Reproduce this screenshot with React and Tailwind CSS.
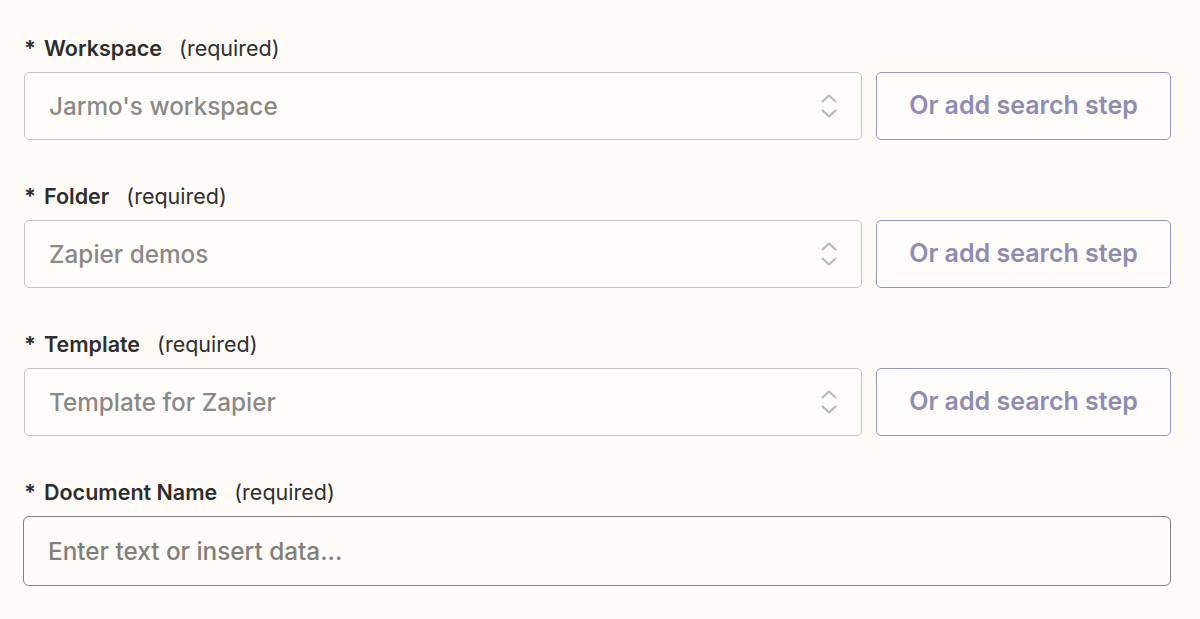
import { Fragment } from 'react';

const FIELDS = [
  { label: 'Workspace', value: "Jarmo's workspace" },
  { label: 'Folder', value: 'Zapier demos' },
  { label: 'Template', value: 'Template for Zapier' },
];

const Label = ({ text }) => (
  <div className="flex items-center h-6 text-[21.5px] leading-6 text-[#2d2e2e]">
    <span className="font-bold w-5">*</span>
    <span className="font-semibold">{text}</span>
    <span className="ml-[17px] font-normal">(required)</span>
  </div>
);

const UpDown = () => (
  <svg width="18" height="26" viewBox="0 0 18 26" fill="none" stroke="#b8b6b2" strokeWidth="2" strokeLinecap="round" strokeLinejoin="round">
    <path d="M2.5 8.5 9 2.5l6.5 6" />
    <path d="M2.5 17.5 9 23.5l6.5-6" />
  </svg>
);

const SelectRow = ({ label, value }) => (
  <div className="flex flex-col gap-3">
    <Label text={label} />
    <div className="flex gap-[14px]">
      <div className="flex-1 h-[68px] flex items-center justify-between pl-6 pr-[23px] border border-[#c8c5c0] rounded-[5px] bg-[#fffdf9]">
        <span className="text-[24.3px] font-medium text-[#8a8988]">{value}</span>
        <UpDown />
      </div>
      <button className="w-[295px] h-[68px] border border-[#9896c6] rounded-[5px] text-[25px] font-semibold text-[#8e8cb5] bg-[#fffdf9]">
        Or add search step
      </button>
    </div>
  </div>
);

export default function App() {
  return (
    <div
      className="w-[1200px] h-[619px] bg-[#fffcf8] pl-6 pr-[29px] pt-[36px] flex flex-col gap-[44px]"
      style={{ fontFamily: 'Inter, "Liberation Sans", sans-serif' }}
    >
      {FIELDS.map((f) => (
        <Fragment key={f.label}>
          <SelectRow label={f.label} value={f.value} />
        </Fragment>
      ))}
      <div className="flex flex-col gap-3">
        <Label text="Document Name" />
        <div className="h-[70px] flex items-center pl-6 border-[1.5px] border-[#86847f] rounded-[6px] -ml-px">
          <span className="text-[24.3px] font-medium text-[#807f7c]">Enter text or insert data...</span>
        </div>
      </div>
    </div>
  );
}
